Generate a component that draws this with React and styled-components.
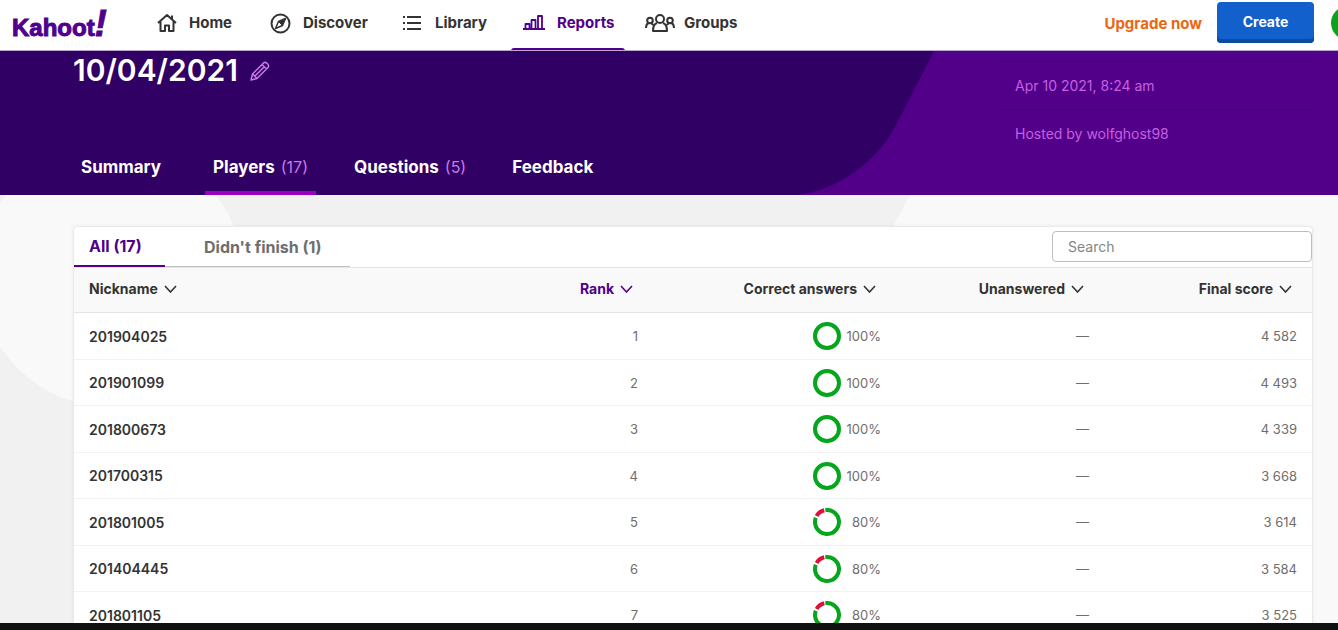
import React from "react";
import styled, { createGlobalStyle } from "styled-components";

const Global = createGlobalStyle`
  *, *::before, *::after { box-sizing: border-box; }
  body { margin: 0; font-family: Inter, "Open Sans", sans-serif; color: #333; }
  button, input { font: inherit; }
`;

const Page = styled.div`
  height: 100vh;
  display: flex;
  flex-direction: column;
  background: #f1f1f1;
`;

const TopBar = styled.header`
  display: flex;
  align-items: center;
  flex: none;
  height: 51px;
  padding-left: 11px;
  background: #fff;
  border-bottom: 1px solid #b9a5cf;
  overflow: hidden;
`;

const LogoLink = styled.a`
  display: flex;
  width: 100px;
  margin-right: 31px;
  padding-bottom: 4px;
`;

const Nav = styled.nav`
  display: flex;
  align-self: stretch;
  flex: 1;
`;

const NavLink = styled.a`
  display: flex;
  align-items: center;
  gap: ${(p) => p.$gap || 12}px;
  width: ${(p) => p.$width}px;
  padding: 0 0 4px ${(p) => p.$pad || 15}px;
  color: ${(p) => (p.$active ? "#50008c" : "#333")};
  font-size: 15px;
  font-weight: 700;
  line-height: 20px;
  text-decoration: none;
  position: relative;

  svg { flex: none; }

  &::after {
    content: "";
    display: ${(p) => (p.$active ? "block" : "none")};
    position: absolute;
    left: 0;
    right: 0;
    bottom: -1px;
    height: 3px;
    border-radius: 3px 3px 0 0;
    background: #50008c;
  }
`;

const Upgrade = styled.a`
  margin: 0 15px 4px 0;
  color: #eb670f;
  font-size: 15px;
  font-weight: 700;
  text-decoration: none;
  white-space: nowrap;
`;

const CreateButton = styled.button`
  width: 97px;
  height: 41px;
  margin: 0 17px 5px 0;
  padding: 0 0 2px;
  border: 0;
  border-radius: 4px;
  background: #1260cc;
  box-shadow: inset 0 -4px #0d4aa3;
  color: #fff;
  font-size: 14px;
  font-weight: 700;
`;

const AvatarSlot = styled.div`
  width: 7px;
  height: 34px;
  margin-bottom: 5px;
  overflow: hidden;
`;

const Avatar = styled.button`
  display: block;
  width: 34px;
  height: 34px;
  padding: 0;
  border: 0;
  border-radius: 50%;
  background: #0aa31c;
`;

const Hero = styled.section`
  position: relative;
  flex: none;
  display: flex;
  justify-content: space-between;
  height: 144px;
  padding: 0 26px 0 73px;
  background: #310065;
`;

const HeroShape = styled.svg`
  position: absolute;
  right: 0;
  top: 0;
  height: 100%;
`;

const HeroMain = styled.div`
  position: relative;
  display: flex;
  flex-direction: column;
  justify-content: space-between;
`;

const TitleRow = styled.div`
  display: flex;
  align-items: center;
  gap: 12px;
`;

const Title = styled.h1`
  margin: 0;
  color: #fff;
  font-size: 30px;
  font-weight: 600;
  line-height: 39px;
`;

const IconButton = styled.button`
  display: flex;
  padding: 0;
  border: 0;
  background: none;
`;

const HeroTabs = styled.nav`
  display: flex;
  gap: 30px;
`;

const HeroTab = styled.a`
  display: flex;
  gap: 6px;
  height: 49px;
  padding: 9px 8px 0;
  border-bottom: 4px solid ${(p) => (p.$active ? "#9a00be" : "transparent")};
  color: #fff;
  font-size: 17px;
  font-weight: 700;
  line-height: 24px;
  text-decoration: none;
`;

const Count = styled.span`
  color: #c879e6;
  font-size: 16px;
  font-weight: 400;
`;

const Meta = styled.ul`
  position: relative;
  width: 312px;
  margin: 0;
  padding: 10px 0 0;
  list-style: none;
`;

const MetaItem = styled.li`
  height: 48px;
  padding-left: 15px;
  border-top: 1px solid #480079;
  color: #c65fe0;
  font-size: 14px;
  line-height: 48px;
`;

const Body = styled.main`
  position: relative;
  flex: 1;
  min-height: 0;
  overflow: hidden;
  padding: 31px 25px 0 73px;
`;

const Backdrop = styled.svg`
  position: absolute;
  left: ${(p) => (p.$right ? "auto" : 0)};
  right: ${(p) => (p.$right ? 0 : "auto")};
  top: 0;
`;

const Card = styled.section`
  position: relative;
  background: #fff;
  border: 1px solid #e9e9eb;
  border-radius: 4px 4px 0 0;
  box-shadow: 0 0 4px rgba(0, 0, 0, 0.06);
`;

const CardTop = styled.div`
  display: flex;
  align-items: center;
  justify-content: space-between;
  height: 40px;
`;

const FilterTabs = styled.div`
  display: flex;
  align-self: stretch;
`;

const FilterTab = styled.button`
  width: ${(p) => p.$width}px;
  padding: 0 0 0 ${(p) => p.$pad}px;
  border: 0;
  border-bottom: ${(p) => (p.$active ? "2px solid #50008c" : "1px solid #c4c4c4")};
  background: none;
  color: ${(p) => (p.$active ? "#50008c" : "#6e6e6e")};
  font-size: 16px;
  font-weight: 700;
  text-align: left;
`;

const Search = styled.input`
  width: 260px;
  height: 31px;
  margin-bottom: 2px;
  padding: 0 15px;
  border: 1px solid #bdbdbd;
  border-radius: 4px;
  background: #fff;
  font-size: 14px;
  &::placeholder { color: #858585; opacity: 1; }
`;

const Table = styled.table`
  width: 100%;
  border-collapse: separate;
  border-spacing: 0;
  table-layout: fixed;
`;

const Th = styled.th`
  width: ${(p) => (p.$width ? `${p.$width}px` : "auto")};
  height: 46px;
  padding: 0 ${(p) => (p.$left ? 0 : 20)}px 4px 15px;
  border-top: 1px solid #e4e4e4;
  border-bottom: 1px solid #e4e4e4;
  background: #f9f9f9;
  text-align: ${(p) => (p.$left ? "left" : "right")};
`;

const SortButton = styled.button`
  display: inline-flex;
  align-items: center;
  gap: 6px;
  padding: 0;
  border: 0;
  background: none;
  color: ${(p) => (p.$active ? "#50008c" : "#333")};
  font-size: 14px;
  font-weight: 700;
  white-space: nowrap;
`;

const Row = styled.tr`
  height: 46px;
  &:nth-child(odd) { height: 47px; }
`;

const Td = styled.td`
  padding: 0 15px;
  border-bottom: 1px solid #f2f2f2;
  color: #6e6e6e;
  font-size: 13px;
  text-align: right;
`;

const Name = styled.th`
  padding: 0 15px;
  border-bottom: 1px solid #f2f2f2;
  font-size: 14px;
  font-weight: 600;
  text-align: left;
`;

const Score = styled.div`
  display: flex;
  align-items: center;
  justify-content: flex-end;
`;

const Percent = styled.span`
  width: 40px;
`;

const BottomEdge = styled.div`
  flex: none;
  height: 7px;
  background: #111;
`;

const stroke = { fill: "none", stroke: "currentColor", strokeWidth: 2, strokeLinejoin: "round" };

const Logo = () => (
  <svg width="100" height="42" viewBox="0 0 100 42" role="img" aria-label="Kahoot!">
    <text x="1" y="34" fill="#50008c" stroke="#50008c" strokeWidth="1" fontFamily="'Liberation Sans', sans-serif" fontWeight="700" fontSize="24">
      Kahoot<tspan fontSize="36" fontStyle="italic">!</tspan>
    </text>
  </svg>
);

const HomeIcon = () => (
  <svg width="20" height="20" viewBox="0 0 20 20" {...stroke}>
    <path d="M1 10 10 2l9 8M3.500 8.500V18H8v-5.500h4V18h4.500V8.500M15 2.500V6" />
  </svg>
);
const CompassIcon = () => (
  <svg width="21" height="21" viewBox="0 0 21 21" {...stroke}>
    <circle cx="10.500" cy="10.500" r="9" />
    <path d="m15.500 5.500-3 7-7 3 3-7z" strokeWidth="1.500" />
    <path d="m15 6-6.200 2.800 3.400 3.400z" fill="currentColor" strokeWidth="1" />
  </svg>
);
const ListIcon = () => (
  <svg width="18" height="16" viewBox="0 0 18 16" fill="none" stroke="currentColor" strokeWidth="2">
    <path d="M4 2h14M4 8h14M4 14h14M0 2h2M0 8h2M0 14h2" />
  </svg>
);
const BarsIcon = () => (
  <svg width="22" height="16" viewBox="0 0 22 16" {...stroke}>
    <path d="M0 14h22M2.500 14V9h4v5M8.500 14V5h4v9M15 14V1h4v13" strokeWidth="1.800" />
  </svg>
);
const GroupIcon = () => (
  <svg width="30" height="18" viewBox="0 0 30 18" {...stroke}>
    <circle cx="15" cy="5" r="4" />
    <path d="M12 9c-3 1-4 4-4 8h14c0-4-1-7-4-8" />
    <circle cx="5" cy="6.500" r="2.800" />
    <circle cx="25" cy="6.500" r="2.800" />
    <path d="M3.500 9C1.500 10 1 12 1 14M6.500 9.500l2 1.500M26.500 9c2 1 2.500 3 2.500 5M23.500 9.500l-2 1.500" />
  </svg>
);
const PencilIcon = () => (
  <svg width="20" height="20" viewBox="0 0 20 20" fill="none" stroke="#c879e6" strokeWidth="1.500" strokeLinejoin="round">
    <path d="m1 19 1.500-6L13.500 2c2-2 6.500 2 4.500 4.500L7 17.500zM2.500 13 7 17.500M12 3.500 16.500 8M5 15l9-9" />
  </svg>
);
const Chevron = () => (
  <svg width="13" height="8" viewBox="0 0 13 8" fill="none" stroke="currentColor" strokeWidth="1.600">
    <path d="m1 1 5.500 6L12 1" />
  </svg>
);

const Ring = ({ value }) => {
  const full = value === 100;
  return (
    <svg width="28" height="28" viewBox="0 0 28 28" fill="none" strokeWidth="4" aria-hidden="true">
      <circle cx="14" cy="14" r="12" stroke="#06a51e" pathLength="100" strokeDasharray={full ? "none" : `${value + 3} 100`} transform={full ? undefined : "rotate(-98 14 14)"} />
      {!full && (
        <circle cx="14" cy="14" r="12" stroke="#e0103c" pathLength="100" strokeDasharray={`${93 - value} 100`} transform="rotate(-150 14 14)" />
      )}
    </svg>
  );
};

const columns = [
  { label: "Nickname", left: true },
  { label: "Rank", width: 187, active: true },
  { label: "Correct answers", width: 243 },
  { label: "Unanswered", width: 208 },
  { label: "Final score", width: 208 },
];

const players = [
  ["201904025", 100, "4 582"],
  ["201901099", 100, "4 493"],
  ["201800673", 100, "4 339"],
  ["201700315", 100, "3 668"],
  ["201801005", 80, "3 614"],
  ["201404445", 80, "3 584"],
  ["201801105", 80, "3 525"],
];

export default function App() {
  return (
    <Page>
      <Global />
      <TopBar>
        <LogoLink href="#home"><Logo /></LogoLink>
        <Nav aria-label="Main">
          <NavLink href="#home" $width={113}><HomeIcon />Home</NavLink>
          <NavLink href="#discover" $width={133}><CompassIcon />Discover</NavLink>
          <NavLink href="#library" $width={123} $gap={14}><ListIcon />Library</NavLink>
          <NavLink href="#reports" $width={114} $pad={12} $active><BarsIcon />Reports</NavLink>
          <NavLink href="#groups" $width={130} $pad={20} $gap={9}><GroupIcon />Groups</NavLink>
        </Nav>
        <Upgrade href="#upgrade">Upgrade now</Upgrade>
        <CreateButton type="button">Create</CreateButton>
        <AvatarSlot><Avatar type="button" aria-label="Account" /></AvatarSlot>
      </TopBar>

      <Hero>
        <HeroShape width="538" viewBox="0 0 538 144" aria-hidden="true">
          <path d="M134 0 95 76C78 108 40 140-5 144H538V0Z" fill="#52008a" />
        </HeroShape>
        <HeroMain>
          <TitleRow>
            <Title>10/04/2021</Title>
            <IconButton type="button" aria-label="Edit title"><PencilIcon /></IconButton>
          </TitleRow>
          <HeroTabs aria-label="Report">
            <HeroTab href="#summary">Summary <Count /></HeroTab>
            <HeroTab href="#players" $active>Players <Count>(17)</Count></HeroTab>
            <HeroTab href="#questions">Questions <Count>(5)</Count></HeroTab>
            <HeroTab href="#feedback">Feedback <Count /></HeroTab>
          </HeroTabs>
        </HeroMain>
        <Meta>
          <MetaItem>Apr 10 2021, 8:24 am</MetaItem>
          <MetaItem>Hosted by wolfghost98</MetaItem>
        </Meta>
      </Hero>

      <Body>
        <Backdrop width="250" height="220" viewBox="0 0 250 220" aria-hidden="true">
          <circle cx="111" cy="80" r="132" fill="#f9f9f9" />
        </Backdrop>
        <Backdrop $right width="450" height="428" viewBox="0 0 450 428" aria-hidden="true">
          <path d="M22 0 0 40V428H450V0Z" fill="#f9f9f9" />
        </Backdrop>
        <Card>
          <CardTop>
            <FilterTabs>
              <FilterTab type="button" $width={91} $pad={15} $active>All (17)</FilterTab>
              <FilterTab type="button" $width={185} $pad={39}>Didn't finish (1)</FilterTab>
            </FilterTabs>
            <Search type="search" placeholder="Search" aria-label="Search" />
          </CardTop>
          <Table>
            <thead>
              <tr>
                {columns.map((c) => (
                  <Th key={c.label} scope="col" $width={c.width} $left={c.left}>
                    <SortButton type="button" $active={c.active}>{c.label}<Chevron /></SortButton>
                  </Th>
                ))}
              </tr>
            </thead>
            <tbody>
              {players.map(([name, pct, score], i) => (
                <Row key={name}>
                  <Name scope="row">{name}</Name>
                  <Td>{i + 1}</Td>
                  <Td><Score><Ring value={pct} /><Percent>{pct}%</Percent></Score></Td>
                  <Td>—</Td>
                  <Td>{score}</Td>
                </Row>
              ))}
            </tbody>
          </Table>
        </Card>
      </Body>
      <BottomEdge />
    </Page>
  );
}
